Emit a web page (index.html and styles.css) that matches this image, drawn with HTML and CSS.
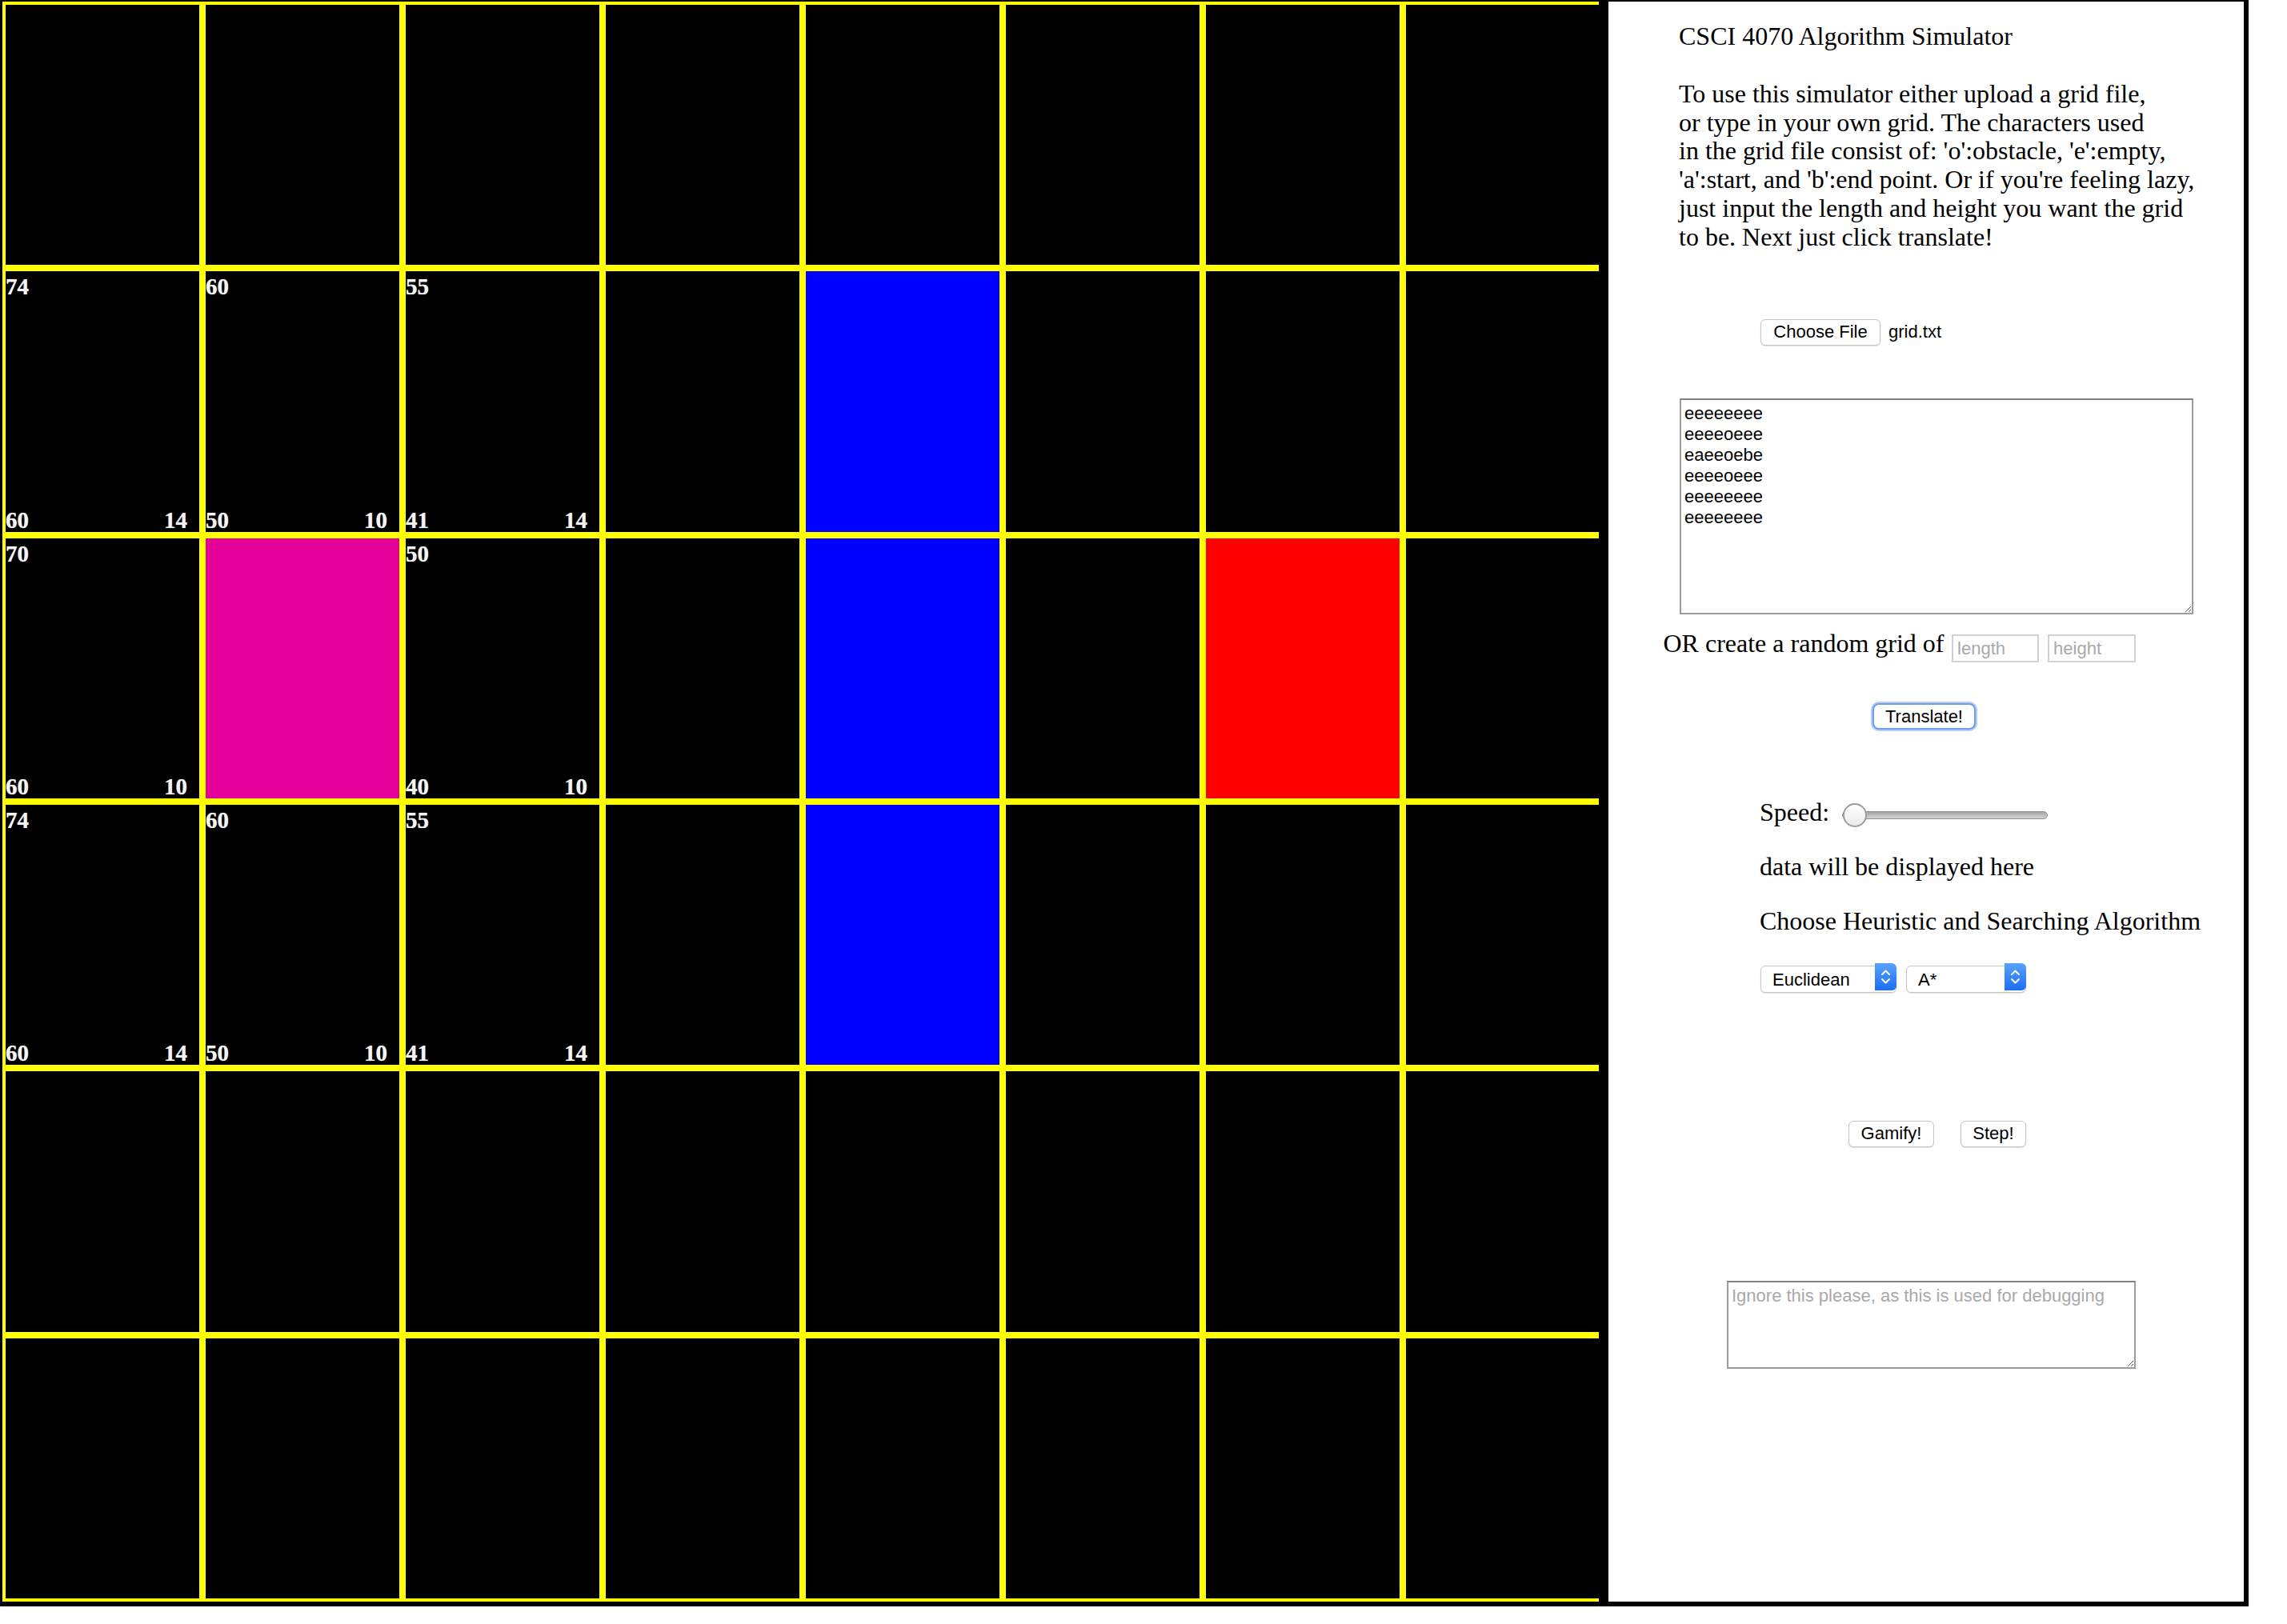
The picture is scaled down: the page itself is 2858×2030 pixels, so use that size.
FILE: index.html
```html
<!DOCTYPE html>
<html lang="en">
<head>
<meta charset="utf-8">
<title>CSCI 4070 Algorithm Simulator</title>
<link rel="stylesheet" href="styles.css">
</head>
<body>
<div class="app">
  <div class="board">
    <div class="grid">
      <!-- row 0 -->
      <div class="cell"></div><div class="cell"></div><div class="cell"></div><div class="cell"></div>
      <div class="cell"></div><div class="cell"></div><div class="cell"></div><div class="cell"></div>
      <!-- row 1 -->
      <div class="cell"><span class="num tl">74</span><span class="num bl">60</span><span class="num br">14</span></div>
      <div class="cell"><span class="num tl">60</span><span class="num bl">50</span><span class="num br">10</span></div>
      <div class="cell"><span class="num tl">55</span><span class="num bl">41</span><span class="num br">14</span></div>
      <div class="cell"></div>
      <div class="cell wall"></div>
      <div class="cell"></div><div class="cell"></div><div class="cell"></div>
      <!-- row 2 -->
      <div class="cell"><span class="num tl">70</span><span class="num bl">60</span><span class="num br">10</span></div>
      <div class="cell start"></div>
      <div class="cell"><span class="num tl">50</span><span class="num bl">40</span><span class="num br">10</span></div>
      <div class="cell"></div>
      <div class="cell wall"></div>
      <div class="cell"></div>
      <div class="cell goal"></div>
      <div class="cell"></div>
      <!-- row 3 -->
      <div class="cell"><span class="num tl">74</span><span class="num bl">60</span><span class="num br">14</span></div>
      <div class="cell"><span class="num tl">60</span><span class="num bl">50</span><span class="num br">10</span></div>
      <div class="cell"><span class="num tl">55</span><span class="num bl">41</span><span class="num br">14</span></div>
      <div class="cell"></div>
      <div class="cell wall"></div>
      <div class="cell"></div><div class="cell"></div><div class="cell"></div>
      <!-- row 4 -->
      <div class="cell"></div><div class="cell"></div><div class="cell"></div><div class="cell"></div>
      <div class="cell"></div><div class="cell"></div><div class="cell"></div><div class="cell"></div>
      <!-- row 5 -->
      <div class="cell"></div><div class="cell"></div><div class="cell"></div><div class="cell"></div>
      <div class="cell"></div><div class="cell"></div><div class="cell"></div><div class="cell"></div>
    </div>
  </div>

  <div class="panel">
    <div class="title">CSCI 4070 Algorithm Simulator</div>
    <div class="intro">To use this simulator either upload a grid file,<br>or type in your own grid. The characters used<br>in the grid file consist of: 'o':obstacle, 'e':empty,<br>'a':start, and 'b':end point. Or if you're feeling lazy,<br>just input the length and height you want the grid<br>to be. Next just click translate!</div>

    <div class="file-row">
      <button class="btn btn-file" type="button">Choose File</button>
      <span class="file-name">grid.txt</span>
    </div>

    <textarea class="grid-text">eeeeeeee
eeeeoeee
eaeeoebe
eeeeoeee
eeeeeeee
eeeeeeee</textarea>

    <div class="or-row">
      <span class="or-label">OR create a random grid of</span>
      <input class="dim-input" type="text" placeholder="length">
      <input class="dim-input dim-second" type="text" placeholder="height">
    </div>

    <button class="btn btn-translate" type="button">Translate!</button>

    <div class="speed-row">
      <span class="speed-label">Speed:</span>
      <input class="speed-range" type="range" min="0" max="100" value="0">
    </div>

    <div class="data-line">data will be displayed here</div>
    <div class="choose-line">Choose Heuristic and Searching Algorithm</div>

    <div class="select-row">
      <div class="select select-heuristic">
        <select class="select-input"><option>Euclidean</option><option>Manhattan</option></select>
        <span class="select-arrow"><svg width="27" height="34" viewBox="0 0 27 34"><path d="M9 14 L13.5 9.5 L18 14" fill="none" stroke="#fff" stroke-width="2" stroke-linecap="round" stroke-linejoin="round"/><path d="M9 20 L13.5 24.5 L18 20" fill="none" stroke="#fff" stroke-width="2" stroke-linecap="round" stroke-linejoin="round"/></svg></span>
      </div>
      <div class="select select-algo">
        <select class="select-input"><option>A*</option><option>Dijkstra</option></select>
        <span class="select-arrow"><svg width="27" height="34" viewBox="0 0 27 34"><path d="M9 14 L13.5 9.5 L18 14" fill="none" stroke="#fff" stroke-width="2" stroke-linecap="round" stroke-linejoin="round"/><path d="M9 20 L13.5 24.5 L18 20" fill="none" stroke="#fff" stroke-width="2" stroke-linecap="round" stroke-linejoin="round"/></svg></span>
      </div>
    </div>

    <div class="action-row">
      <button class="btn btn-gamify" type="button">Gamify!</button>
      <button class="btn btn-step" type="button">Step!</button>
    </div>

    <textarea class="debug-text" placeholder="Ignore this please, as this is used for debugging"></textarea>
  </div>
</div>
</body>
</html>
```

FILE: styles.css
```css
html, body {
  margin: 0;
  padding: 0;
  background: #fff;
}

.app {
  display: flex;
  align-items: flex-start;
  gap: 12px;
  width: 2810px;
  height: 2008px;
  box-sizing: border-box;
  padding: 2px 6px 6px 3px;
  background: #000;
}

/* ---------- board ---------- */
.board {
  flex: none;
  width: 1995px;
  height: 2000px;
  overflow: hidden;
}

.grid {
  width: 2000px;
  height: 2000px;
  display: grid;
  grid-template-columns: repeat(8, 250px);
  grid-template-rows: repeat(6, 1fr);
}

.cell {
  position: relative;
  border: 4px solid #ffff00;
  background: #000;
}

.cell.wall { background: #0000ff; }
.cell.start { background: #e6009a; }
.cell.goal { background: #ff0000; }

.num {
  position: absolute;
  font-family: "Liberation Serif", "Times New Roman", serif;
  font-size: 29px;
  font-weight: bold;
  line-height: 29px;
  color: #f4f4f4;
  text-shadow: 0 0 1px rgba(255, 255, 255, 0.7);
}
.num.tl { left: 0; top: 5px; }
.num.bl { left: 0; bottom: 0; }
.num.br { left: 198px; bottom: 0; }

/* ---------- panel ---------- */
.panel {
  flex: none;
  width: 794px;
  height: 2000px;
  background: #fff;
  display: flex;
  flex-direction: column;
  align-items: flex-start;
  font-family: "Liberation Serif", "Times New Roman", serif;
  font-size: 32px;
  line-height: 35.8px;
  color: #000;
}

.title {
  margin: 26px 0 0 88px;
  white-space: nowrap;
}

.intro {
  margin: 36px 0 0 88px;
  white-space: nowrap;
}

.btn {
  font-family: "Liberation Sans", Arial, sans-serif;
  font-size: 22px;
  line-height: 1;
  color: #000;
  background: #fff;
  border: 1px solid #c4c4c4;
  border-radius: 6px;
  box-shadow: 0 1px 1px rgba(0, 0, 0, 0.12);
  padding: 0;
  height: 33px;
  box-sizing: border-box;
  text-align: center;
}

.file-row {
  display: flex;
  align-items: center;
  gap: 10px;
  margin: 84px 0 0 190px;
}
.btn-file { width: 150px; }
.file-name {
  font-family: "Liberation Sans", Arial, sans-serif;
  font-size: 22px;
  line-height: 26px;
}

.grid-text {
  margin: 66px 0 0 89px;
  width: 642px;
  height: 270px;
  box-sizing: border-box;
  border: 2px solid #9b9b9b;
  border-top-color: #808080;
  padding: 4px;
  font-family: "Liberation Sans", Arial, sans-serif;
  font-size: 22px;
  line-height: 26px;
  color: #000;
  background: #fff;
  resize: both;
  outline: none;
}

.or-row {
  display: flex;
  align-items: flex-start;
  margin: 19.3px 0 0 68.5px;
}
.or-label { white-space: nowrap; }

.dim-input {
  margin: 5.7px 0 0 9.6px;
  width: 109px;
  height: 35px;
  box-sizing: border-box;
  border: 2px solid #d2d2d2;
  padding: 2px 5px 0;
  font-family: "Liberation Sans", Arial, sans-serif;
  font-size: 22px;
  color: #000;
  background: #fff;
  outline: none;
}
.dim-input.dim-second { margin-left: 11px; width: 110px; }
.dim-input::placeholder { color: #a9a9a9; }

.btn-translate {
  margin: 51.5px 0 0 330px;
  width: 129px;
  height: 33px;
  border: 2px solid #6f9fe8;
  border-radius: 8px;
  box-shadow: 0 0 0 2px #b3cdf5;
}

.speed-row {
  display: flex;
  align-items: flex-start;
  margin: 85.8px 0 0 189px;
}
.speed-label { white-space: nowrap; }

.speed-range {
  -webkit-appearance: none;
  appearance: none;
  width: 257px;
  height: 30px;
  margin: 5.7px 0 0 16px;
  padding: 0;
  background: transparent;
}
.speed-range::-webkit-slider-runnable-track {
  height: 10px;
  box-sizing: border-box;
  border: 1px solid #8e8e8e;
  border-radius: 5px;
  background: linear-gradient(#a5a5a5, #d4d4d4);
}
.speed-range::-webkit-slider-thumb {
  -webkit-appearance: none;
  appearance: none;
  width: 30px;
  height: 30px;
  box-sizing: border-box;
  border-radius: 50%;
  border: 2px solid #9d9d9d;
  background: linear-gradient(#ffffff, #ebebeb);
  margin-top: -11px;
}

.data-line {
  margin: 32.5px 0 0 189px;
  white-space: nowrap;
}
.choose-line {
  margin: 32.2px 0 0 189px;
  white-space: nowrap;
}

.select-row {
  display: flex;
  gap: 12px;
  margin: 34px 0 0 190px;
}
.select {
  position: relative;
  height: 34px;
}
.select-heuristic { width: 170px; }
.select-algo { width: 150px; }

.select-input {
  -webkit-appearance: none;
  appearance: none;
  width: 100%;
  height: 100%;
  box-sizing: border-box;
  border: 1px solid #c6c6c6;
  border-radius: 6px;
  background: #fff;
  box-shadow: 0 1px 1px rgba(0, 0, 0, 0.12);
  padding: 0 0 0 14px;
  margin: 0;
  font-family: "Liberation Sans", Arial, sans-serif;
  font-size: 22px;
  color: #000;
  outline: none;
}

.select-arrow {
  position: absolute;
  top: 0;
  right: 0;
  width: 27px;
  height: 34px;
  border-radius: 0 6px 6px 0;
  background: linear-gradient(#5aa2fb, #1b6ef2);
  display: flex;
}

.action-row {
  display: flex;
  gap: 33px;
  margin: 163px 0 0 300px;
}
.btn-gamify { width: 107px; }
.btn-step { width: 82px; }

.debug-text {
  margin: 167px 0 0 148px;
  width: 511px;
  height: 110px;
  box-sizing: border-box;
  border: 2px solid #9b9b9b;
  border-top-color: #808080;
  padding: 4px 0 4px 4px;
  font-family: "Liberation Sans", Arial, sans-serif;
  font-size: 22px;
  line-height: 26px;
  color: #000;
  background: #fff;
  resize: both;
  outline: none;
}
.debug-text::placeholder { color: #a9a9a9; }
```
